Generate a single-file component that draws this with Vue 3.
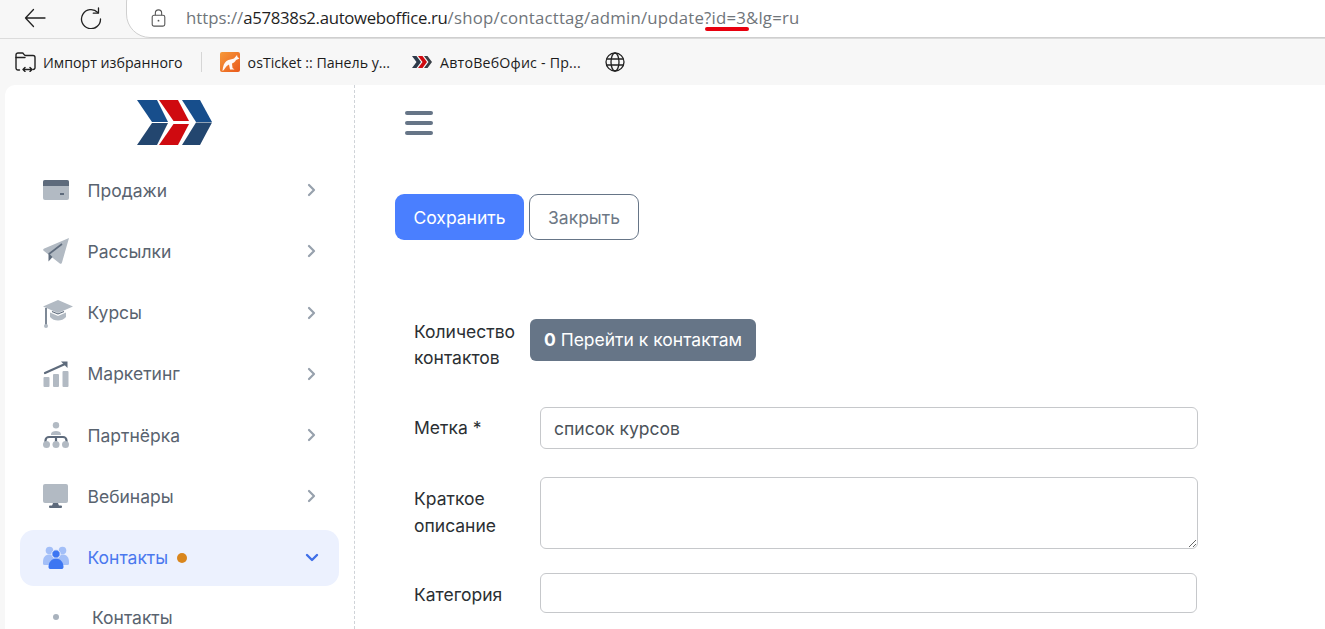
<script setup>
const menu = [
  { label: 'Продажи', icon: 'card' },
  { label: 'Рассылки', icon: 'plane' },
  { label: 'Курсы', icon: 'cap' },
  { label: 'Маркетинг', icon: 'chart' },
  { label: 'Партнёрка', icon: 'tree' },
  { label: 'Вебинары', icon: 'monitor' },
]
</script>

<template>
  <div class="screen">
    <header class="toolbar">
      <svg class="nav-back" viewBox="0 0 22 20" width="22" height="20" fill="none" stroke="#222" stroke-width="1.3" stroke-linecap="round" stroke-linejoin="round">
        <path d="M21 10H1.500M9.500 1.500 1.500 10l8 8.500" />
      </svg>
      <svg class="nav-reload" viewBox="0 0 22 22" width="22" height="22" fill="none" stroke="#222" stroke-width="1.3" stroke-linecap="round" stroke-linejoin="round">
        <path d="M17.800 5.500A9.500 9.500 0 1 0 20.500 12" />
        <path d="M18.500 1v5.200h-5.200" />
      </svg>
      <div class="address">
        <svg class="lock" viewBox="0 0 16 20" width="15" height="18" fill="none" stroke="#555" stroke-width="1.2">
          <rect x="1" y="7" width="14" height="12" rx="2" />
          <path d="M4.500 7V4.500a3.500 3.500 0 0 1 7 0V7" />
          <circle cx="8" cy="13" r="1" fill="#555" stroke="none" />
        </svg>
        <span class="url"><span class="dim">https://</span><span class="host">a57838s2.autoweboffice.ru</span><span class="dim path">/shop/contacttag/admin/update?id=3&amp;lg=ru</span></span>
        <i class="red-mark"></i>
      </div>
    </header>

    <nav class="bookmarks">
      <svg class="bm-import" viewBox="0 0 21 20" width="21" height="20" fill="none" stroke="#222" stroke-width="1.4" stroke-linecap="round" stroke-linejoin="round">
        <path d="M4.500 18H3a2 2 0 0 1-2-2V3a2 2 0 0 1 2-2h4.500c1 0 1.500 2.500 3 2.500H18a2 2 0 0 1 2 2V16a2 2 0 0 1-2 1.500" />
        <path d="M1 5.500h9" />
        <path d="M8 17.500h9M10 15.500l-2 2 2 2M15 15.500l2 2-2 2" />
      </svg>
      <span class="bm-text bm-first">Импорт избранного</span>
      <i class="bm-sep"></i>
      <span class="fav-os">
        <svg viewBox="0 0 20 20" width="20" height="20">
          <path d="M2.500 18.500C3 14 4 11 6.500 9c2.500-2 5.500-1.500 7.500-2.500L17 3l.5 2 2 1.500-3.500 1.500c-.8 1.800-2.500 3-4 3.500l.5 4.500 2 1.500H10l-1-5c-1 .5-2 1-3 2.500-1.200 1.500-2 3-3.500 4z" fill="#fff" opacity="0.95" />
        </svg>
      </span>
      <span class="bm-text bm-os">osTicket :: Панель у...</span>
      <svg class="fav-awo" viewBox="0 0 20 12" width="20" height="12">
        <path d="M0 0h4.500L9 6l-4.500 6H0l4.500-6z" fill="#2d3a4a" />
        <path d="M6 0h4.500L15 6l-4.500 6H6l4.500-6z" fill="#cf0a10" />
        <path d="M12 0h3.500L20 6l-4.500 6H12l4.500-6z" fill="#3a3f46" />
      </svg>
      <span class="bm-text bm-awo">АвтоВебОфис - Пр...</span>
      <svg class="globe" viewBox="0 0 20 20" width="20" height="20" fill="none" stroke="#222" stroke-width="1.300">
        <circle cx="10" cy="10" r="9" />
        <ellipse cx="10" cy="10" rx="4" ry="9" />
        <path d="M1.500 7h17M1.500 13h17" />
      </svg>
    </nav>

    <div class="page">
      <aside class="sidebar">
        <div class="logo-wrap">
          <svg viewBox="0 0 75 45" width="75" height="45">
            <path d="M0 0h20l11 22H15z" fill="#174e8c" />
            <path d="M15 23h16L20 45H0z" fill="#23466f" />
            <path d="M22 0h19l11 21H36.500z" fill="#cf0a10" />
            <path d="M36.500 24H52L41 45H22z" fill="#cf0a10" />
            <path d="M45 0h18l12 22H59z" fill="#174e8c" />
            <path d="M59 22.500h16L63 45H45z" fill="#23466f" />
          </svg>
        </div>
        <ul class="menu">
          <li v-for="item in menu" :key="item.label" class="menu-item">
            <span class="menu-icon">
              <svg v-if="item.icon === 'card'" viewBox="0 0 26 20" width="26" height="20">
                <rect width="26" height="20" rx="2" fill="#b2bac3" />
                <path d="M2 0h22a2 2 0 0 1 2 2v4H0V2a2 2 0 0 1 2-2z" fill="#5e6b7c" />
                <rect x="17" y="13" width="4" height="2" fill="#5e6b7c" />
              </svg>
              <svg v-else-if="item.icon === 'plane'" viewBox="0 0 26 26" width="26" height="26">
                <path d="M26 0 19 24.500c-.4 1.400-1.500 1.700-2.500.8L1 13c-1.300-1-1-2 .3-2.500z" fill="#b2bac3" />
                <path d="M5.500 15v8.500l4-4.500z" fill="#5e6b7c" />
                <path d="M6 16 19 6" stroke="#5e6b7c" stroke-width="1.600" fill="none" />
              </svg>
              <svg v-else-if="item.icon === 'cap'" class="icon-cap" viewBox="0 0 30 28" width="30" height="28">
                <path d="M15 0 30 6.500 15 13 0 6.500z" fill="#b2bac3" />
                <path d="M7 12.500 15 16l8-3.500V17c-2 2.500-5 3.500-8 3.500S9 19.500 7 17z" fill="#b2bac3" />
                <path d="M9 11.500 15 14l6-2.500" stroke="#5e6b7c" stroke-width="1.100" fill="none" />
                <path d="M3 8v17" stroke="#5e6b7c" stroke-width="1.600" />
                <circle cx="3" cy="26" r="2" fill="#b2bac3" />
              </svg>
              <svg v-else-if="item.icon === 'chart'" viewBox="0 0 26 26" width="26" height="26">
                <path d="M2 12 22 3" stroke="#5e6b7c" stroke-width="2.200" stroke-linecap="round" fill="none" />
                <path d="M18 0.500h6.500V7z" fill="#5e6b7c" />
                <rect x="0.500" y="16" width="6" height="10" rx="1" fill="#b2bac3" />
                <rect x="10" y="13" width="6" height="13" rx="1" fill="#b2bac3" />
                <rect x="19.500" y="10" width="6" height="16" rx="1" fill="#b2bac3" />
              </svg>
              <svg v-else-if="item.icon === 'tree'" viewBox="0 0 26 26" width="26" height="26">
                <circle cx="13" cy="3.200" r="3.200" fill="#b2bac3" />
                <path d="M8 12c0-4 10-4 10 0v1H8z" fill="#b2bac3" />
                <path d="M2.500 20v-1.500a3.500 3.500 0 0 1 3.500-3.500h14a3.500 3.500 0 0 1 3.500 3.500V20" stroke="#5e6b7c" stroke-width="2.200" fill="none" />
                <path d="M13 15v5" stroke="#5e6b7c" stroke-width="2.200" />
                <circle cx="3.500" cy="22.500" r="3.500" fill="#b2bac3" />
                <circle cx="13" cy="22.500" r="3.500" fill="#b2bac3" />
                <circle cx="22.500" cy="22.500" r="3.500" fill="#b2bac3" />
              </svg>
              <svg v-else viewBox="0 0 26 24" width="26" height="24">
                <rect width="25" height="19" rx="2" fill="#b2bac3" />
                <path d="M10 19h5l1 3H9z" fill="#5e6b7c" />
                <rect x="6" y="21.500" width="13" height="2.500" rx="1" fill="#5e6b7c" />
              </svg>
            </span>
            <span class="menu-label">{{ item.label }}</span>
            <svg class="chev" viewBox="0 0 10 14" width="10" height="14" fill="none" stroke="#97a1ad" stroke-width="2.200" stroke-linecap="round" stroke-linejoin="round">
              <path d="M2 2l5 5-5 5" />
            </svg>
          </li>
          <li class="menu-item active">
            <span class="menu-icon">
              <svg viewBox="0 0 26 23" width="26" height="23">
                <circle cx="6.500" cy="4.500" r="3.800" fill="#a3bff8" />
                <circle cx="19.500" cy="4.500" r="3.800" fill="#a3bff8" />
                <path d="M0 16c0-5 2.500-7.500 6.500-7.500S13 11 13 16v3H1.500A1.500 1.500 0 0 1 0 17.500z" fill="#a3bff8" />
                <path d="M26 16c0-5-2.500-7.500-6.500-7.500S13 11 13 16v3h11.500a1.500 1.500 0 0 0 1.500-1.500z" fill="#a3bff8" />
                <circle cx="13" cy="8" r="4.200" stroke="#ecf1fe" stroke-width="1" fill="#3d76f2" />
                <path d="M5.500 21c0-5 3.500-8.500 7.500-8.500s7.500 3.500 7.500 8.500c0 1.500-1 2-2 2h-11c-1 0-2-.5-2-2z" fill="#3d76f2" />
              </svg>
            </span>
            <span class="menu-label">Контакты</span>
            <i class="dot"></i>
            <svg class="chev-down" viewBox="0 0 14 10" width="14" height="10" fill="none" stroke="#3f6fe8" stroke-width="2.400" stroke-linecap="round" stroke-linejoin="round">
              <path d="M2 2l5 5 5-5" />
            </svg>
          </li>
          <li class="sub-item">
            <i class="sub-dot"></i>
            <span>Контакты</span>
          </li>
        </ul>
      </aside>

      <main class="content">
        <div class="burger"><i></i><i></i><i></i></div>
        <div class="actions">
          <button class="btn btn-save" type="button">Сохранить</button>
          <button class="btn btn-close" type="button">Закрыть</button>
        </div>
        <form class="form">
          <div class="row row-count">
            <label class="label">Количество контактов</label>
            <span class="badge"><b>0</b> Перейти к контактам</span>
          </div>
          <div class="row row-tag">
            <label class="label">Метка *</label>
            <input class="field field-tag" type="text" value="список курсов" />
          </div>
          <div class="row row-desc">
            <label class="label">Краткое описание</label>
            <textarea class="field field-desc"></textarea>
          </div>
          <div class="row row-cat">
            <label class="label">Категория</label>
            <input class="field field-cat" type="text" />
          </div>
        </form>
      </main>
    </div>
  </div>
</template>

<style>
html, body { margin: 0; height: 100%; overflow: hidden; background: #f7f7f7; }
</style>

<style scoped>
.screen {
  width: 1325px;
  height: 629px;
  overflow: hidden;
  display: flex;
  flex-direction: column;
  background: #f7f7f7;
  font-family: Inter, "Noto Sans", sans-serif;
}
.toolbar {
  height: 38px;
  flex: none;
  display: flex;
  align-items: flex-end;
  overflow: hidden;
}
.nav-back { margin: 0 0 10px 24px; }
.nav-reload { margin: 0 0 9px 34px; }
.address {
  position: relative;
  margin-left: 24px;
  flex: 1;
  height: 60px;
  box-sizing: border-box;
  margin-right: -40px;
  background: #fff;
  border: 1px solid #cfcfcf;
  border-radius: 24px;
  display: flex;
  align-items: flex-end;
  padding: 0 0 9px 24px;
}
.lock { margin-bottom: 1px; }
.url {
  margin-left: 20px;
  font-family: "Open Sans", "Noto Sans", sans-serif;
  font-size: 16.800px;
  line-height: 20px;
  white-space: nowrap;
}
.dim { color: #70757a; }
.host { color: #1f1f1f; letter-spacing: -0.32px; }
.path { letter-spacing: 0.2px; }
.red-mark {
  position: absolute;
  left: 578px;
  bottom: 6px;
  width: 44px;
  height: 4px;
  border-radius: 3px;
  background: #e8000e;
}
.bookmarks {
  height: 47px;
  flex: none;
  display: flex;
  align-items: center;
  box-sizing: border-box;
  padding-left: 15px;
  border-top: 1px solid #dcdcdc;
}
.bm-text { font-family: "Open Sans", "Noto Sans", sans-serif; font-size: 14.200px; color: #1c1c1c; white-space: nowrap; }
.bm-first { margin-left: 7px; }
.bm-sep { width: 1px; height: 20px; background: #d6d6d6; margin-left: 18px; }
.fav-os {
  width: 20px;
  height: 20px;
  margin-left: 18px;
  border-radius: 2px;
  background: linear-gradient(135deg, #f79a3a, #e9591b);
  display: block;
}
.fav-os svg { display: block; }
.bm-os { margin-left: 8px; }
.fav-awo { margin-left: 22px; }
.bm-awo { margin-left: 8px; letter-spacing: 0.2px; }
.globe { margin-left: 24px; }
.page {
  flex: 1;
  min-height: 0;
  margin-left: 5px;
  background: #fff;
  border-top-left-radius: 10px;
  display: flex;
}
.sidebar {
  width: 350px;
  flex: none;
  box-sizing: border-box;
  border-right: 1px dashed #cfd3d8;
  padding: 15px 15px 0;
}
.logo-wrap { display: flex; justify-content: center; height: 45px; }
.logo-wrap svg { display: block; margin-left: -11px; }
.menu { list-style: none; margin: 17px 0 0; padding: 0; }
.menu-item {
  height: 56px;
  margin-bottom: 5.300px;
  display: flex;
  align-items: center;
  padding: 0 22px 0 23px;
  border-radius: 14px;
  color: #59636f;
  font-size: 17.500px;
}
.menu-icon { width: 44.500px; flex: none; display: flex; align-items: center; }
.menu-icon svg { display: block; flex: none; }
.icon-cap { margin-top: 2px; }
.menu-label { white-space: nowrap; }
.chev { margin-left: auto; }
.chev-down { margin-left: auto; margin-right: -2px; }
.active { background: #ecf1fe; color: #4a78ee; }
.dot { width: 10px; height: 10px; border-radius: 50%; background: #d9861d; margin-left: 9px; margin-top: 1px; }
.sub-item {
  display: flex;
  align-items: center;
  height: 52px;
  padding-left: 33px;
  color: #59636f;
  font-size: 17.500px;
}
.sub-dot { width: 6px; height: 6px; border-radius: 50%; background: #a9b2bd; margin-right: 33px; }
.content { flex: 1; min-width: 0; padding: 26px 0 0 40px; }
.burger { width: 28px; margin-left: 10px; display: flex; flex-direction: column; gap: 6px; }
.burger i { display: block; height: 4px; border-radius: 2px; background: #667587; }
.actions { display: flex; gap: 5px; margin-top: 59px; }
.btn {
  height: 46px;
  box-sizing: border-box;
  border-radius: 9px;
  font-family: inherit;
  font-size: 17.500px;
  padding: 0;
}
.btn-save { width: 129px; background: #4a7fff; border: 0; color: #fff; }
.btn-close { width: 110px; background: #fff; border: 1px solid #667587; color: #6d7885; }
.form { margin-top: 79px; padding-left: 19px; color: #2b2f33; font-size: 17.500px; }
.row { display: flex; align-items: flex-start; }
.label { width: 116px; flex: none; line-height: 26px; }
.row-count { height: 52px; }
.badge {
  height: 42px;
  width: 226px;
  box-sizing: border-box;
  border-radius: 6px;
  background: #667587;
  color: #fff;
  font-size: 17.500px;
  display: flex;
  align-items: center;
  justify-content: center;
  white-space: pre;
  padding-bottom: 1px;
}
.badge b { font-weight: 700; }
.row-tag { margin-top: 36px; }
.row-tag .label { padding-top: 8px; }
.row-desc { margin-top: 28px; }
.row-desc .label { padding-top: 8px; line-height: 27px; }
.row-cat { margin-top: 24px; }
.row-cat .label { padding-top: 9px; }
.field {
  display: block;
  box-sizing: border-box;
  margin-left: 10px;
  width: 658px;
  border: 1px solid #c6c8cb;
  border-radius: 6px;
  background: #fff;
  padding: 0 13px;
  font-family: inherit;
  font-size: 17.500px;
  color: #4b5259;
  outline: none;
}
.field-tag { height: 42px; }
.field-desc { height: 72px; resize: vertical; }
.field-cat { height: 40px; width: 657px; }
</style>
